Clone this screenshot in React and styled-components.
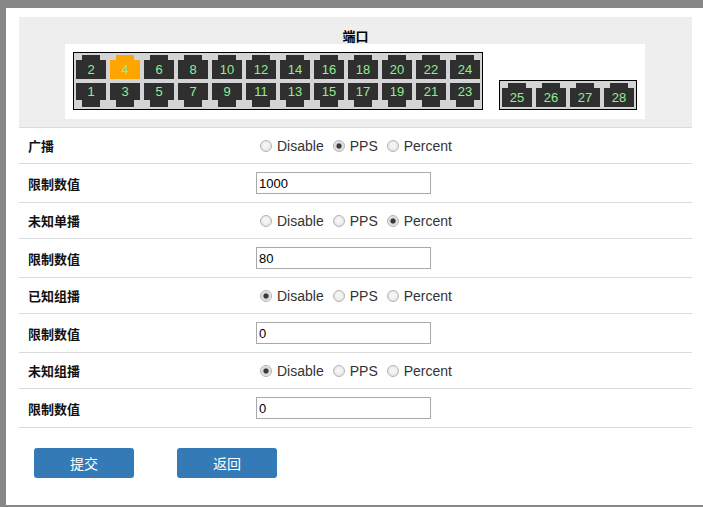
import React from 'react';
import styled, { createGlobalStyle } from 'styled-components';

const GlobalStyle = createGlobalStyle`
  html, body {
    margin: 0;
    padding: 0;
    background: #fff;
  }
  body {
    font-family: "Liberation Sans", Arial, "Noto Sans CJK SC", sans-serif;
    font-size: 14px;
    color: #333;
  }
`;

const topPorts = [2, 4, 6, 8, 10, 12, 14, 16, 18, 20, 22, 24];
const bottomPorts = [1, 3, 5, 7, 9, 11, 13, 15, 17, 19, 21, 23];
const uplinkPorts = [25, 26, 27, 28];
const activePort = 4;

const rows = [
  { label: '广播', name: 'bc', checked: 'PPS', value: '1000' },
  { label: '未知单播', name: 'uc', checked: 'Percent', value: '80' },
  { label: '已知组播', name: 'kmc', checked: 'Disable', value: '0' },
  { label: '未知组播', name: 'umc', checked: 'Disable', value: '0' },
];

const modes = ['Disable', 'PPS', 'Percent'];

const Port = ({ num, notch }) => {
  const active = num === activePort;
  return (
    <PortWrap $notch={notch}>
      <PortNotch $active={active} $notch={notch} />
      <PortBody $active={active} $notch={notch}>
        {num}
      </PortBody>
    </PortWrap>
  );
};

const App = () => {
  return (
    <>
      <GlobalStyle />
      <Frame>
        <PortPanel>
          <PanelTitle>端口</PanelTitle>
          <PortBox>
            <SwitchFace>
              <PortRow>
                {topPorts.map((p) => (
                  <Port key={p} num={p} notch="top" />
                ))}
              </PortRow>
              <PortRow>
                {bottomPorts.map((p) => (
                  <Port key={p} num={p} notch="bottom" />
                ))}
              </PortRow>
            </SwitchFace>
            <SwitchFace>
              <PortRow>
                {uplinkPorts.map((p) => (
                  <Port key={p} num={p} notch="top" />
                ))}
              </PortRow>
            </SwitchFace>
          </PortBox>
        </PortPanel>

        <Form>
          {rows.map((r) => (
            <React.Fragment key={r.name}>
              <Row $h={35}>
                <Label>{r.label}</Label>
                <RadioGroup>
                  {modes.map((m) => (
                    <RadioItem key={m}>
                      <Radio type="radio" name={r.name} defaultChecked={m === r.checked} />
                      {m}
                    </RadioItem>
                  ))}
                </RadioGroup>
              </Row>
              <Row $h={38}>
                <Label>限制数值</Label>
                <TextInput type="text" defaultValue={r.value} />
              </Row>
            </React.Fragment>
          ))}
        </Form>

        <Actions>
          <Button>提交</Button>
          <Button>返回</Button>
        </Actions>
      </Frame>
    </>
  );
};

const Frame = styled.div`
  box-sizing: border-box;
  height: 507px;
  border-top: 8px solid #878787;
  border-left: 6px solid #878787;
  border-bottom: 2px solid #878787;
  padding: 9px 11px 0 13px;
`;

const PortPanel = styled.div`
  background: #eeeeee;
  border-bottom: 1px solid #dadada;
  padding: 10px 0 8px;
`;

const PanelTitle = styled.div`
  text-align: center;
  font-family: "Noto Sans CJK SC", sans-serif;
  font-weight: bold;
  font-size: 13px;
  line-height: 17px;
  color: #000;
`;

const PortBox = styled.div`
  width: 580px;
  height: 75px;
  box-sizing: border-box;
  margin: 0 0 0 46px;
  background: #fff;
  padding: 8px 8px 9px;
  display: flex;
  align-items: flex-end;
  gap: 16px;
`;

const SwitchFace = styled.div`
  border: 1px solid #000;
  background: #d4d3d6;
  padding: 2px;
  display: flex;
  flex-direction: column;
  gap: 4px;
`;

const PortRow = styled.div`
  display: flex;
  gap: 4px;
`;

const PortWrap = styled.div`
  width: 30px;
  height: 24px;
  display: flex;
  flex-direction: ${(p) => (p.$notch === 'top' ? 'column' : 'column-reverse')};
  align-items: center;
`;

const PortNotch = styled.div`
  width: 18px;
  height: ${(p) => (p.$notch === 'top' ? 5 : 7)}px;
  background: ${(p) => (p.$active ? '#ffa500' : '#2f2f2f')};
`;

const PortBody = styled.div`
  width: 30px;
  height: ${(p) => (p.$notch === 'top' ? 19 : 17)}px;
  background: ${(p) => (p.$active ? '#ffa500' : '#2f2f2f')};
  color: #90ee90;
  font-family: "Liberation Sans", Arial, sans-serif;
  font-size: 13px;
  line-height: ${(p) => (p.$notch === 'top' ? 19 : 18)}px;
  text-align: center;
`;

const Form = styled.div`
  display: flex;
  flex-direction: column;
`;

const Row = styled.div`
  height: ${(p) => p.$h}px;
  border-bottom: 1px solid #dadada;
  display: grid;
  grid-template-columns: 237px 1fr;
  align-items: center;
`;

const Label = styled.div`
  padding-left: 9px;
  font-family: "Noto Sans CJK SC", sans-serif;
  font-weight: bold;
  font-size: 13px;
  color: #111;
`;

const RadioGroup = styled.div`
  display: flex;
  align-items: center;
  padding-left: 4px;
  gap: 9px;
`;

const RadioItem = styled.label`
  display: flex;
  align-items: center;
  gap: 5px;
  font-size: 14px;
  color: #333;
`;

const Radio = styled.input`
  appearance: none;
  margin: 0;
  width: 12px;
  height: 12px;
  border-radius: 50%;
  border: 1px solid #b4b4b4;
  box-sizing: border-box;
  background: radial-gradient(circle at 50% 45%, #f4f4f4 30%, #dadada 100%);
  &:checked {
    background: radial-gradient(circle, #3a3a3a 0 2.2px, #bdbdbd 2.8px, #e8e8e8 4px, #d6d6d6 100%);
  }
`;

const TextInput = styled.input`
  box-sizing: border-box;
  width: 175px;
  height: 22px;
  border: 1px solid #a9a9a9;
  padding: 1px 2px;
  font-family: "Liberation Sans", Arial, sans-serif;
  font-size: 13px;
  color: #000;
  outline: none;
`;

const Actions = styled.div`
  display: flex;
  gap: 43px;
  padding: 20px 0 0 15px;
`;

const Button = styled.button`
  width: 100px;
  height: 30px;
  border: none;
  border-radius: 3px;
  background: #337ab7;
  color: #fff;
  font-family: "Noto Sans CJK SC", sans-serif;
  font-size: 14px;
  cursor: pointer;
`;

export default App;
